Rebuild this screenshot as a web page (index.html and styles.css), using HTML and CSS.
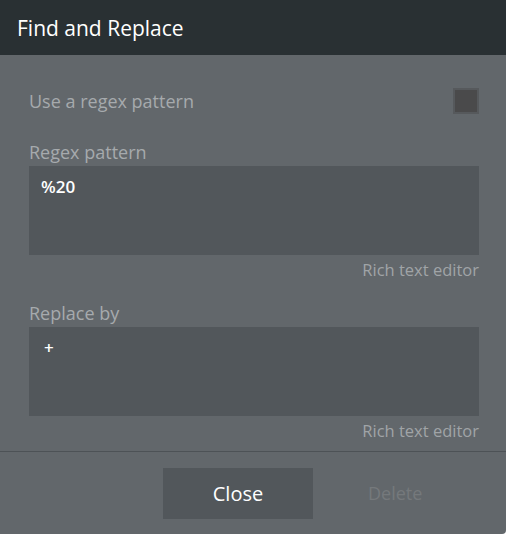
FILE: index.html
```html
<!DOCTYPE html>
<html>
<head>
<meta charset="utf-8">
<link rel="stylesheet" href="styles.css">
</head>
<body>
<div class="dialog">
  <div class="header">Find and Replace</div>
  <div class="content">
    <div class="row-check">
      <span class="label">Use a regex pattern</span>
      <span class="checkbox"></span>
    </div>
    <div class="field first">
      <div class="label">Regex pattern</div>
      <div class="box"><span class="value">%20</span></div>
      <div class="hint">Rich text editor</div>
    </div>
    <div class="field second">
      <div class="label">Replace by</div>
      <div class="box"><span class="value plus">+</span></div>
      <div class="hint">Rich text editor</div>
    </div>
  </div>
  <div class="footer">
    <button class="btn-close">Close</button>
    <span class="btn-delete">Delete</span>
  </div>
</div>
</body>
</html>
```
FILE: styles.css
```css
html, body {
  margin: 0;
  padding: 0;
  background: #ffffff;
}
body {
  font-family: "Open Sans", "Noto Sans", sans-serif;
}
.dialog {
  width: 506px;
  height: 534px;
  background: #62676b;
  border-bottom-right-radius: 4px;
  display: flex;
  flex-direction: column;
  overflow: hidden;
}
.header {
  height: 55px;
  flex: none;
  background: #293033;
  color: #ffffff;
  font-size: 21px;
  display: flex;
  align-items: center;
  padding-left: 17px;
  box-sizing: border-box;
}
.content {
  padding: 33px 27px 0 29px;
  height: 396px;
  box-sizing: border-box;
  flex: none;
}
.row-check {
  display: flex;
  justify-content: space-between;
  align-items: center;
  height: 26px;
}
.label {
  color: #a6aaad;
  font-size: 18px;
  line-height: 24px;
}
.checkbox {
  width: 22px;
  height: 22px;
  border: 2px solid #56595c;
  background: #4a4a4b;
}
.field.first {
  margin-top: 26px;
}
.field.second {
  margin-top: 21px;
}
.field .label {
  margin-bottom: 2px;
}
.box {
  height: 89px;
  background: #52575b;
  padding: 10px 12px 0 12px;
  box-sizing: border-box;
}
.value {
  color: #ffffff;
  font-size: 17px;
  font-weight: 600;
  line-height: 22px;
}
.plus {
  padding-left: 3px;
}
.hint {
  text-align: right;
  color: #a0a4a7;
  font-size: 16.5px;
  line-height: 20px;
  margin-top: 5px;
}
.footer {
  flex: 1;
  border-top: 1px solid #4d5256;
  display: flex;
  align-items: center;
  padding-left: 163px;
}
.btn-close {
  width: 150px;
  height: 51px;
  border: none;
  background: #52575b;
  color: #ffffff;
  font-family: "Open Sans", "Noto Sans", sans-serif;
  font-size: 20px;
  padding: 0;
  margin-top: 1px;
}
.btn-delete {
  margin-left: 55px;
  color: #75797c;
  font-size: 18px;
}
```
